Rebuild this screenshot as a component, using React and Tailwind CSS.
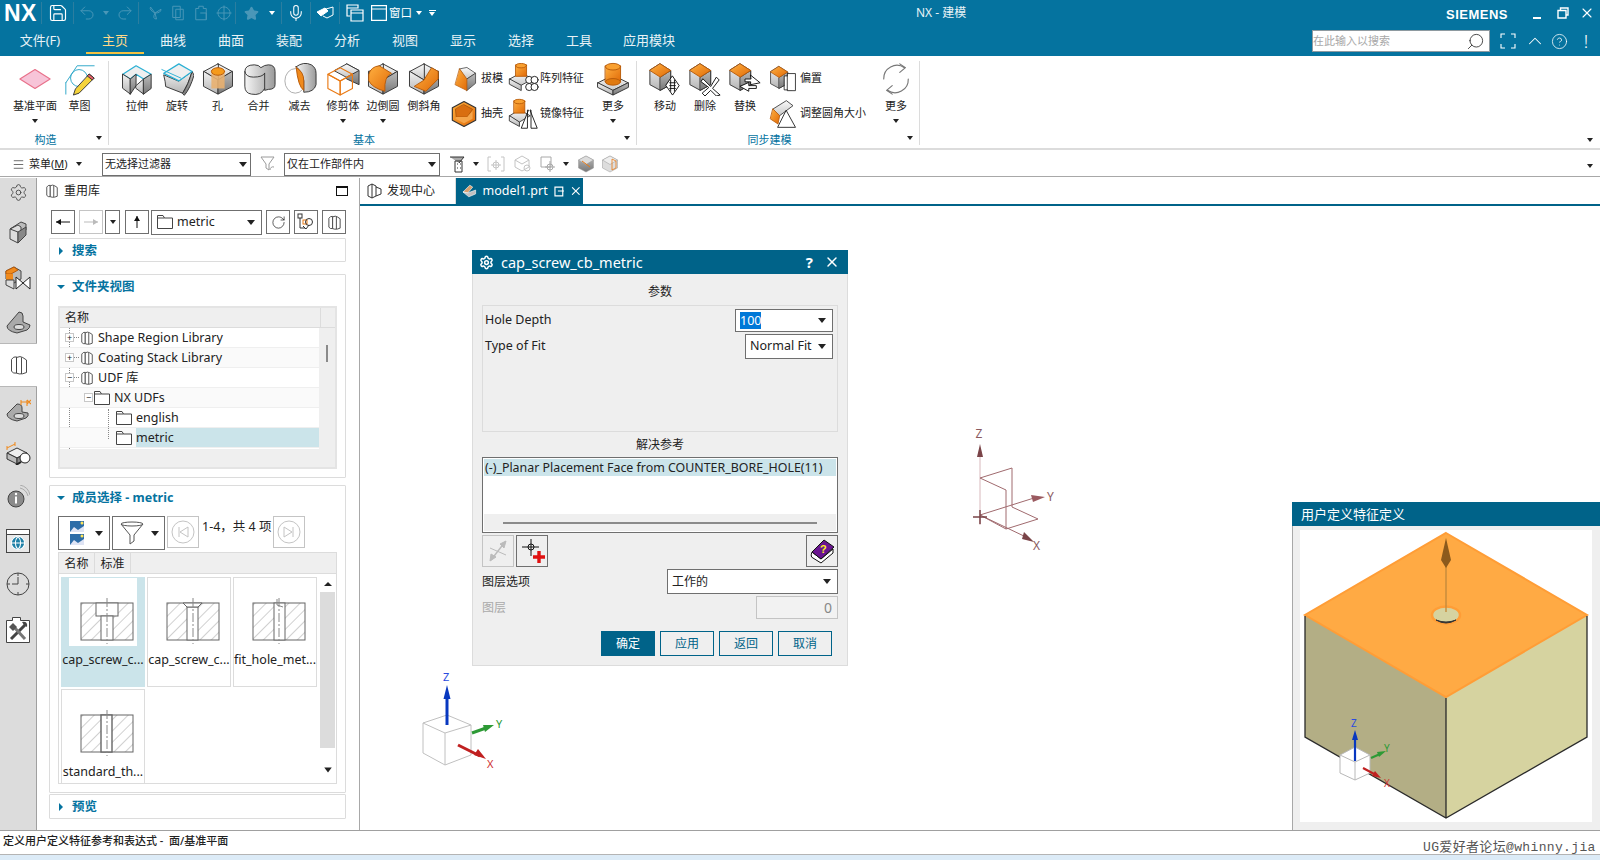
import React from 'react';
import { Save, Undo2, Redo2, Star, Mic, ChevronUp, CircleHelp, Search, X, Settings, Menu, RotateCw, Globe } from 'lucide-react';

const Caret = ({ c = 'border-t-[#222]', cls = '' }) => (
  <span className={`inline-block w-0 h-0 border-l-[3px] border-r-[3px] border-t-[4px] border-l-transparent border-r-transparent ${c} ${cls}`} />
);
const BigCaret = ({ cls = '' }) => (
  <span className={`inline-block w-0 h-0 border-l-[4px] border-r-[4px] border-t-[5px] border-l-transparent border-r-transparent border-t-[#222] ${cls}`} />
);
const Sep = ({ c = 'bg-[#2b7ea0]', h = 'h-[22px]' }) => <span className={`w-px ${h} ${c} shrink-0`} />;

const Defs = () => (
  <svg width="0" height="0" className="absolute">
    <defs>
      <linearGradient id="gt" x1="0" y1="0" x2="0" y2="1"><stop offset="0" stopColor="#fafafa" /><stop offset="1" stopColor="#c8c8c8" /></linearGradient>
      <linearGradient id="gl" x1="0" y1="0" x2="0" y2="1"><stop offset="0" stopColor="#f2f2f2" /><stop offset="1" stopColor="#b4b4b4" /></linearGradient>
      <linearGradient id="gr" x1="0" y1="0" x2="0" y2="1"><stop offset="0" stopColor="#bcbcbc" /><stop offset="1" stopColor="#777" /></linearGradient>
      <linearGradient id="or" x1="0" y1="0" x2="1" y2="1"><stop offset="0" stopColor="#ffb040" /><stop offset="1" stopColor="#e06a08" /></linearGradient>
      <linearGradient id="cy" x1="0" y1="0" x2="1" y2="0"><stop offset="0" stopColor="#f6f6f6" /><stop offset="1" stopColor="#9a9a9a" /></linearGradient>
    </defs>
  </svg>
);

const I = ({ s = 34, children, w, cls = '' }) => (
  <svg width={w || s} height={s} viewBox="0 0 36 36" className={`shrink-0 ${cls}`} strokeLinejoin="round" strokeLinecap="round">{children}</svg>
);
const Hex = ({ top = 'url(#gt)' }) => (
  <g stroke="#333" strokeWidth="1">
    <polygon points="18,2 33,10 18,19" fill={top} />
    <polygon points="18,2 3,10 18,19" fill={top} />
    <polygon points="3,10 18,19 18,34 3,26" fill="url(#gl)" />
    <polygon points="33,10 18,19 18,34 33,26" fill="url(#gr)" />
  </g>
);
const icons = {
  datum: <I><polygon points="18,8 34,18 18,28 2,18" fill="#f7c4d8" stroke="#e8708a" strokeWidth="1.2" /></I>,
  sketch: <I><path d="M3 22 L15 4 H33" fill="none" stroke="#2aa6c8" strokeWidth="1" /><path d="M3 22V34" stroke="#2aa6c8" fill="none" /><circle cx="17" cy="17" r="9" fill="none" stroke="#2aa6c8" /><polygon points="28,13 33,17 17,33 11,35 13,29" fill="#f5d33a" stroke="#333" /><polygon points="28,13 33,17 31,19 26,15" fill="#e8606a" stroke="#333" /></I>,
  extrude: <I><polygon points="3,13 17,4 33,13 25,18 17,13 11,18" fill="#efefef" stroke="#2ab0d4" strokeWidth="1.3" /><polygon points="3,13 11,18 11,34 3,28" fill="url(#gl)" stroke="#333" /><polygon points="11,18 17,13 17,25 11,34" fill="url(#gr)" stroke="#333" /><polygon points="17,25 25,18 25,34 17,28" fill="url(#gl)" stroke="#333" /><polygon points="25,18 33,13 33,28 25,34" fill="url(#gr)" stroke="#333" /></I>,
  revolve: <I><path d="M4 14 Q6 22 6 26 L24 33 Q30 24 34 10 L20 20 Z" fill="url(#gl)" stroke="#333" /><path d="M24 33 Q30 24 34 10 L36 14 Q32 28 26 35Z" fill="url(#gr)" stroke="#333" /><polygon points="20,2 34,10 20,20 4,12" fill="#efefef" stroke="#2ab0d4" strokeWidth="1.3" /><path d="M2 8 L22 17" stroke="#2ab0d4" /></I>,
  hole: <I><Hex /><rect x="11" y="9" width="14" height="19" fill="#e8b070" opacity=".9" /><ellipse cx="18" cy="10" rx="7" ry="4" fill="#f59a1c" stroke="#b85a08" /></I>,
  unite: <I><path d="M3 10 Q3 3 13 3 Q18 3 20 6 Q24 3 28 3 Q35 3 35 10 V24 Q35 29 28 29 L24 30 V28 Q20 36 10 34 Q3 33 3 26Z" fill="url(#cy)" stroke="#333" /><path d="M3 10 Q4 16 12 16 Q22 16 24 12" fill="none" stroke="#333" /><path d="M24 12V28" stroke="#333" /></I>,
  subtract: <I><ellipse cx="13" cy="20" rx="11" ry="13" fill="none" stroke="#aaa" /><path d="M14 5 Q22 -1 30 3 Q35 6 35 12 V24 Q33 32 22 32 L22 20 Q20 10 14 5Z" fill="url(#cy)" stroke="#333" /><path d="M14 6 Q22 10 22 20 V30 Q16 26 14 6 Z" fill="#f08a1c" stroke="#b85a08" /></I>,
  trim: <I><polygon points="22,2 35,9 35,24 22,18" fill="url(#gr)" stroke="#333" /><polygon points="9,9 22,2 35,9 22,16" fill="url(#gt)" stroke="#333" /><polygon points="2,13 15,6 28,13 15,20" fill="none" stroke="#e97a15" strokeWidth="1.2" /><polygon points="2,13 15,20 15,35 2,28" fill="none" stroke="#e97a15" strokeWidth="1.2" /><polygon points="28,13 15,20 15,35 28,28" fill="none" stroke="#e97a15" strokeWidth="1.2" /></I>,
  blend: <I><Hex /><path d="M3 13 Q5 5 14 4 L27 12 Q19 15 20 31 Q6 27 3 20Z" fill="url(#or)" stroke="#b85a08" /></I>,
  chamfer: <I><Hex /><polygon points="18,19 26,6 33,10 33,18 20,31 8,26" fill="url(#or)" stroke="#b85a08" /></I>,
  draft: <I s={26}><polygon points="12,4 22,2 34,10 22,18" fill="url(#gt)" stroke="#333" /><polygon points="22,18 34,10 34,24 22,34" fill="url(#gr)" stroke="#333" /><polygon points="12,4 22,18 22,34 6,26" fill="url(#or)" stroke="#b85a08" /></I>,
  shell: <I s={28}><polygon points="18,2 33,10 33,26 18,34 3,26 3,10" fill="url(#or)" stroke="#333" strokeWidth="1.5" /><polygon points="18,6 29,12 22,22 8,22 7,12" fill="#d96e10" stroke="#a65208" /><polygon points="8,22 22,22 29,14 29,24 18,30 7,24" fill="#f5a54a" /></I>,
  pattern: <I s={32}><polygon points="3,18 16,11 29,18 16,25" fill="url(#gt)" stroke="#333" /><polygon points="3,18 16,25 16,31 3,24" fill="url(#gl)" stroke="#333" /><rect x="10" y="2" width="12" height="13" fill="url(#or)" stroke="#b85a08" /><ellipse cx="16" cy="3" rx="6" ry="2.5" fill="#f9a030" stroke="#b85a08" /><g fill="#fff" stroke="#111"><circle cx="25" cy="19" r="4" /><circle cx="31" cy="19" r="4" /><circle cx="25" cy="27" r="4" /><circle cx="31" cy="27" r="4" /></g></I>,
  mirror: <I s={32}><polygon points="3,20 14,13 26,20 14,27" fill="url(#gt)" stroke="#333" /><polygon points="3,20 14,27 14,32 3,26" fill="url(#gl)" stroke="#333" /><rect x="8" y="3" width="12" height="14" fill="url(#or)" stroke="#b85a08" /><ellipse cx="14" cy="4" rx="6" ry="2.5" fill="#f9a030" stroke="#b85a08" /><path d="M24 14 L16 34 H23 V14 Z M26 14 L34 34 H27 V14Z" fill="#fff" stroke="#111" /></I>,
  more: <I><polygon points="2,22 18,14 34,22 18,30" fill="url(#gt)" stroke="#333" /><polygon points="2,22 18,30 18,35 2,27" fill="url(#gl)" stroke="#333" /><polygon points="34,22 18,30 18,35 34,27" fill="url(#gr)" stroke="#333" /><rect x="10" y="4" width="16" height="17" fill="url(#or)" stroke="#b85a08" /><ellipse cx="18" cy="5" rx="8" ry="3.5" fill="#f9a030" stroke="#b85a08" /><ellipse cx="18" cy="21" rx="8" ry="3.5" fill="#e07a10" stroke="#b85a08" /></I>,
};
const Box = () => (
  <g stroke="#333">
    <polygon points="13,2 24,9 24,24 13,30 2,24 2,9" fill="url(#gl)" />
    <polygon points="13,16 24,9 24,24 13,30" fill="url(#gr)" />
    <polygon points="13,2 24,9 13,16 2,9" fill="url(#or)" stroke="#b85a08" />
  </g>
);
const sync = {
  move: <I><Box /><path d="M26 15 L33 25 L26 35 L19 25Z" fill="#fff" stroke="#111" /><path d="M23 22h6M23 25h6M23 28h6M24 19v12M28 19v12" stroke="#111" strokeWidth="1" /></I>,
  del: <I><Box /><path d="M16 18 L24 26 L30 16 L33 19 L26 28 L34 35 L30 36 L24 30 L18 36 L15 33 L22 27 L14 21Z" fill="#fff" stroke="#111" /></I>,
  rep: <I><Box /><path d="M24 14 L34 22 L24 24 V21 H18 V18 H24Z M22 22 V25 H30 V28 H22 V31 L13 26Z" fill="#fff" stroke="#111" /></I>,
  off: <I s={28}><Box /><rect x="20" y="14" width="10" height="18" fill="#fff" stroke="#111" /><rect x="24" y="11" width="10" height="22" fill="#fff" stroke="#111" /></I>,
  res: <I s={30}><polygon points="6,12 22,2 30,8 14,20" fill="url(#gt)" stroke="#333" /><polygon points="6,12 14,20 12,30 3,24" fill="url(#or)" stroke="#b85a08" /><polygon points="22,14 33,34 12,34" fill="#fff" stroke="#111" /></I>,
};

const RBtn = ({ w = 'w-[41px]', icon, label, arrow, tc = 'text-[#222]' }) => (
  <div className={`${w} shrink-0 flex flex-col items-center`}>
    <div className="h-[36px] flex items-center justify-center">{icon}</div>
    <span className={`mt-[2px] text-[11px] leading-[14px] whitespace-nowrap ${tc}`}>{label}</span>
    {arrow && <Caret cls="mt-[6px]" />}
  </div>
);
const RSmall = ({ icon, label, w }) => (
  <div className={`${w} h-[35px] flex items-center gap-[2px]`}>
    <span className="w-[30px] flex justify-center shrink-0">{icon}</span>
    <span className="text-[11px] whitespace-nowrap text-[#222]">{label}</span>
  </div>
);
const RGroup = ({ w, label, children, pl }) => (
  <div className={`${w} shrink-0 h-[84px] flex flex-col border-r border-[#dcdcdc]`}>
    <div className={`h-[72px] flex ${pl}`}>{children}</div>
    <div className="relative flex-1 flex items-center justify-center pr-[17px] text-[11px] leading-none text-[#05739f]">
      {label}
      <Caret cls="absolute right-[6px] top-[3px]" />
    </div>
  </div>
);

const Ribbon = () => (
  <div className="h-[94px] shrink-0 bg-white border-b-[2px] border-[#dcdcdc] flex pt-[5px] relative">
    <RGroup w="w-[109px]" label="构造" pl="pl-[10px]">
      <RBtn w="w-[50px]" icon={icons.datum} label="基准平面" arrow />
      <RBtn w="w-[41px] -ml-[1px]" icon={icons.sketch} label="草图" />
    </RGroup>
    <RGroup w="w-[528px]" label="基本" pl="pl-[8px]">
      <RBtn w="w-[40px]" icon={icons.extrude} label="拉伸" />
      <RBtn w="w-[40px]" icon={icons.revolve} label="旋转" />
      <RBtn icon={icons.hole} label="孔" />
      <RBtn icon={icons.unite} label="合并" />
      <RBtn icon={icons.subtract} label="减去" />
      <RBtn w="w-[46px]" icon={icons.trim} label="修剪体" arrow />
      <RBtn w="w-[34px]" icon={icons.blend} label="边倒圆" arrow />
      <RBtn w="w-[48px]" icon={icons.chamfer} label="倒斜角" />
      <div className="w-[59px] ml-[1px] shrink-0 flex flex-col">
        <RSmall w="w-[59px]" icon={icons.draft} label="拔模" />
        <RSmall w="w-[59px]" icon={icons.shell} label="抽壳" />
      </div>
      <div className="w-[85px] shrink-0 flex flex-col">
        <RSmall w="w-[85px]" icon={icons.pattern} label="阵列特征" />
        <RSmall w="w-[85px]" icon={icons.mirror} label="镜像特征" />
      </div>
      <RBtn w="w-[40px]" icon={icons.more} label="更多" arrow />
    </RGroup>
    <RGroup w="w-[283px]" label="同步建模" pl="pl-[8px]">
      <RBtn w="w-[40px]" icon={sync.move} label="移动" />
      <RBtn w="w-[40px]" icon={sync.del} label="删除" />
      <RBtn w="w-[40px]" icon={sync.rep} label="替换" />
      <div className="w-[111px] pl-[3px] shrink-0 flex flex-col">
        <RSmall w="w-[108px]" icon={sync.off} label="偏置" />
        <RSmall w="w-[108px]" icon={sync.res} label="调整圆角大小" />
      </div>
      <RBtn w="w-[40px]" icon={<I><path d="M27 6 A14 14 0 0 0 5 18" fill="none" stroke="#777" strokeWidth="1.2" /><path d="M9 30 A14 14 0 0 0 31 18" fill="none" stroke="#777" strokeWidth="1.2" /><path d="M22 2 L28 6 L22 11 M14 25 L8 30 L14 34" fill="none" stroke="#777" strokeWidth="1.2" /></I>} label="更多" arrow />
    </RGroup>
    <Caret cls="absolute right-[7px] bottom-[6px]" />
  </div>
);

const TitleBar = () => (
  <div className="h-[28px] shrink-0 bg-[#05739f] flex items-center text-white pb-[2px]">
    <span className="w-[41px] pl-[4px] font-['Liberation_Sans',sans-serif] text-[23px] font-bold leading-none tracking-[0.5px]">NX</span>
    <Sep />
    <span className="w-[31px] flex justify-center"><Save size={20} strokeWidth={1.4} /></span>
    <Sep />
    <span className="w-[26px] flex justify-center text-[#4a97b8]"><Undo2 size={18} strokeWidth={1.3} /></span>
    <span className="w-[12px] flex justify-center"><Caret c="border-t-[#4a97b8]" /></span>
    <span className="w-[26px] flex justify-center text-[#4a97b8]"><Redo2 size={18} strokeWidth={1.3} /></span>
    <Sep />
    <span className="w-[4px]" />
    {[
      <path d="M12 12 L6 4 Q4 8 12 12 L20 7 Q20 12 12 12 L14 20 Q8 20 12 12" />,
      <path d="M5 3h10v15H5z M9 7h10v14H9z" />,
      <path d="M5 6h4V3h6v3h4v15H5z M11 12h8v9" />,
      <path d="M12 4a8 8 0 1 0 .01 0 M12 2v20 M2 12h20" />,
    ].map((p, i) => (
      <span key={i} className="w-[23px] flex justify-center text-[#4a97b8]"><svg width="18" height="18" viewBox="0 0 24 24" fill="none" stroke="currentColor" strokeWidth="1.3">{p}</svg></span>
    ))}
    <Sep />
    <span className="w-[30px] flex justify-center text-[#4a97b8]"><Star size={15} fill="currentColor" /></span>
    <span className="w-[12px] flex justify-center"><Caret c="border-t-white" /></span>
    <span className="w-[3px]" />
    <Sep />
    <span className="w-[28px] flex justify-center"><Mic size={18} strokeWidth={1.4} /></span>
    <Sep />
    <span className="w-[28px] flex justify-center">
      <svg width="18" height="14" viewBox="0 0 18 14" fill="none" stroke="#fff" strokeWidth="1"><path d="M1 6 L9 2 L12 5 L5 10 Z" fill="#fff" /><path d="M10 3 L17 1 V9 L11 12 L7 10" /></svg>
    </span>
    <Sep />
    <span className="w-[30px] flex justify-center">
      <svg width="18" height="18" viewBox="0 0 18 18" fill="none" stroke="#fff" strokeWidth="1.2"><path d="M1 1h11v3H1z M1 4v8h3" /><path d="M5 6h12v11H5z M5 9h12" /></svg>
    </span>
    <span className="w-[18px] flex justify-center">
      <svg width="16" height="16" viewBox="0 0 16 16" fill="none" stroke="#fff" strokeWidth="1.2"><path d="M.6.6h14.8v14.8H.6z M.6 4h14.8" /></svg>
    </span>
    <span className="ml-[1px] w-[24px] text-[11.5px] whitespace-nowrap">窗口</span>
    <span className="w-[12px] flex justify-center"><Caret c="border-t-white" /></span>
    <span className="w-[14px] flex flex-col items-center gap-[1px]"><span className="w-[7px] h-px bg-white" /><Caret c="border-t-white" /></span>
    <span className="ml-[477px] text-[12px] font-normal whitespace-nowrap text-[#e8f2f6]">NX - 建模</span>
    <span className="ml-auto mr-[25px] text-[13px] font-bold font-['Liberation_Sans',sans-serif] tracking-[0.5px] leading-none mt-[3px]">SIEMENS</span>
    <span className="w-[8px] h-[2px] bg-white mt-[10px] mr-[16px]" />
    <svg width="12" height="12" viewBox="0 0 12 12" fill="none" stroke="#fff" strokeWidth="1.4" className="mr-[10px]"><path d="M3.5 3V1h7.5v7H9 M1 3.5h8v7.5H1z" /></svg>
    <X size={16} strokeWidth={1.6} className="mr-[5px]" />
  </div>
);

const MenuBar = () => (
  <div className="h-[28px] shrink-0 bg-[#05739f] flex items-stretch text-white text-[13px] pb-[2px]">
    <span className="ml-[11px] w-[58px] flex items-center justify-center text-[#e8f2f6]">文件(F)</span>
    <span className="ml-[17px] w-[58px] flex items-center justify-center text-[#ffd98a] border-b-[2px] border-[#f5c242] pt-[2px]">主页</span>
    {['曲线', '曲面', '装配', '分析', '视图', '显示', '选择', '工具'].map((t) => (
      <span key={t} className="w-[58px] flex items-center justify-center text-[#e8f2f6]">{t}</span>
    ))}
    <span className="w-[82px] flex items-center justify-center text-[#e8f2f6]">应用模块</span>
    <div className="ml-auto flex items-center">
      <div className="w-[178px] h-[22px] bg-white border border-[#8e9aa0] flex items-center justify-between text-[11px] text-[#a8a8a8] pr-[4px]">
        <span>在此输入以搜索</span>
        <Search size={19} strokeWidth={1.1} className="text-[#333] -scale-x-100" />
      </div>
      <span className="w-[36px] flex justify-center">
        <svg width="16" height="16" viewBox="0 0 16 16" fill="none" stroke="#fff" strokeWidth="1.1"><path d="M1 5V1h4 M11 1h4v4 M15 11v4h-4 M5 15H1v-4" /></svg>
      </span>
      <ChevronUp size={22} strokeWidth={1.1} className="mx-[-2px]" />
      <span className="w-[30px] flex justify-center"><CircleHelp size={17} strokeWidth={1.1} /></span>
      <span className="w-[24px] mr-[2px] flex justify-center text-[18px] leading-none font-light">!</span>
    </div>
  </div>
);

const Combo = ({ w, children }) => (
  <div className={`${w} h-[23px] border border-[#6f6f6f] bg-white flex items-center justify-between pl-[2px] pr-[3px] text-[11px] text-[#222] shrink-0`}>
    <span className="whitespace-nowrap">{children}</span><BigCaret />
  </div>
);
const GIcon = ({ children, w = 'w-[24px]', c = '#9a9a9a' }) => (
  <span className={`${w} flex justify-center shrink-0`}><svg width="20" height="20" viewBox="0 0 20 20" fill="none" stroke={c} strokeWidth="1">{children}</svg></span>
);
const SelBar = () => (
  <div className="h-[27px] shrink-0 bg-white border-b-[1px] border-[#a8a8a8] flex items-center relative pt-[2px]">
    <span className="ml-[12px] w-[17px]"><Menu size={13} strokeWidth={1.2} className="text-[#222]" /></span>
    <span className="text-[11px] text-[#222] whitespace-nowrap w-[44px]">菜单(<span className="underline">M</span>)</span>
    <Caret cls="ml-[3px]" />
    <span className="ml-[5px]"><Sep c="bg-[#dcdcdc]" /></span>
    <span className="ml-[15px]"><Combo w="w-[149px]">无选择过滤器</Combo></span>
    <GIcon w="w-[33px]"><path d="M3 3h13l-5 7v6l-3-2v-4z" /><path d="M16 13a3 3 0 0 0-4 3" /></GIcon>
    <Combo w="w-[156px]">仅在工作部件内</Combo>
    <GIcon w="w-[36px]" c="#333"><path d="M2 3h14l-5 6" fill="#aaa" /><path d="M7 7h7v11H7z M9 10h1M12 10h1M9 14h1M12 14h1" /></GIcon>
    <Caret cls="-ml-[3px]" />
    <span className="w-[3px]" />
    <GIcon w="w-[28px]" c="#c4c4c4"><path d="M2 3h3M2 3v14h3M15 3h3v14h-3 M10 6v10 M5 11h10" /><circle cx="10" cy="11" r="3" /></GIcon>
    <GIcon w="w-[26px]" c="#c4c4c4"><path d="M9 2l7 4v7l-7 4-7-4V6z M2 6l7 4 7-4" /><circle cx="14" cy="14" r="3" /></GIcon>
    <GIcon w="w-[24px]" c="#a8a8a8"><path d="M3 3h10v10H3z" /><circle cx="12" cy="13" r="3" /><path d="M12 7v11M7 13h10" /></GIcon>
    <Caret cls="ml-[3px]" />
    <span className="w-[5px]" />
    <span className="w-[24px] flex justify-center"><svg width="18" height="18" viewBox="0 0 36 36"><polygon points="18,2 33,10 33,26 18,34 3,26 3,10" fill="url(#gr)" stroke="#999" /><polygon points="18,2 33,10 18,19 3,10" fill="#ddd" stroke="#999" /><path d="M10 12 L26 24" stroke="#e97a15" strokeWidth="2" /></svg></span>
    <span className="w-[24px] flex justify-center"><svg width="18" height="18" viewBox="0 0 36 36"><polygon points="18,2 33,10 33,26 18,34 3,26 3,10" fill="#ddd" stroke="#999" /><polygon points="18,2 33,10 18,19 3,10" fill="#eee" stroke="#999" /><path d="M22 8 V30 M22 8 L30 12 V26 L22 30" fill="none" stroke="#e97a15" strokeWidth="1.6" /></svg></span>
    <span className="ml-[7px]"><Sep c="bg-[#dcdcdc]" /></span>
    <Caret cls="absolute right-[7px] top-[14px]" />
  </div>
);

const Books = ({ s = 14, c = '#444' }) => (
  <svg width={s} height={s} viewBox="0 0 16 16" fill="#fff" stroke={c} strokeWidth="1" className="shrink-0"><path d="M2 3.5 Q3.5 1 6 1.5 V14.5 Q3.5 15 2 13Z" /><path d="M6 2 Q9 0.5 11 2 L14 4 V14 L11 15 Q8 15.5 6 14.5Z" /><path d="M10 2 V15" /></svg>
);

const RailIcon = ({ children, h = 'h-[40px]', m = '', active }) => (
  <div className={`${h} ${m} flex items-center justify-center shrink-0 ${active ? 'w-[37px] bg-white border-y border-[#b8b8b8] relative z-10' : 'w-[36px]'}`}>{children}</div>
);
const Rail = () => (
  <div className="w-[37px] shrink-0 bg-[#dcdcdc] border-r border-[#a0a0a0] flex flex-col">
    <RailIcon h="h-[28px]"><Settings size={19} strokeWidth={1.1} className="text-[#444]" /></RailIcon>
    <RailIcon m="mt-[7px]"><svg width="22" height="24" viewBox="0 0 22 24"><polygon points="3,8 11,4 14,6 14,12 19,9 19,3 14,1" fill="#bbb" stroke="#444" /><polygon points="3,8 11,11 11,22 3,18" fill="#ddd" stroke="#444" /><polygon points="11,11 19,6 19,14 11,22" fill="#888" stroke="#444" /></svg></RailIcon>
    <RailIcon m="mt-[5px]"><svg width="28" height="26" viewBox="0 0 28 26"><polygon points="2,6 10,2 17,6 17,14 10,18 2,14" fill="#bbb" stroke="#444" /><polygon points="2,6 10,2 14,5 7,9 2,9" fill="#f08a1c" stroke="#b85a08" /><polygon points="2,9 9,9 9,15 2,15" fill="#f08a1c" /><polygon points="2,15 10,15 10,24 2,20" fill="#ddd" stroke="#444" /><path d="M12 12 L26 24 V12 L12 24Z" fill="#fff" stroke="#222" /></svg></RailIcon>
    <RailIcon m="mt-[4px]"><svg width="26" height="24" viewBox="0 0 26 24"><path d="M2 16 L14 2 Q18 2 18 6 L18 12 L25 15 Q25 18 22 20 L12 23 Q2 21 2 16Z" fill="#aaa" stroke="#444" /><ellipse cx="14" cy="17" rx="5" ry="2.5" fill="#ddd" stroke="#444" /></svg></RailIcon>
    <RailIcon h="h-[44px]" m="mt-[1px]" active><svg width="20" height="26" viewBox="0 0 16 16"><g fill="#fff" stroke="#333" strokeWidth=".7"><path d="M2 3.5 Q3.5 1 6 1.5 V14.5 Q3.5 15 2 13Z" /><path d="M6 2 Q9 0.5 11 2 L14 4 V14 L11 15 Q8 15.5 6 14.5Z" /><path d="M10 2 V15" /></g></svg></RailIcon>
    <RailIcon m="mt-[3px]"><svg width="26" height="24" viewBox="0 0 26 24"><path d="M2 16 L12 6 Q17 6 17 10 L17 14 L23 15 Q24 18 21 20 L12 23 Q2 21 2 16Z" fill="#aaa" stroke="#444" /><ellipse cx="14" cy="18" rx="5" ry="2.5" fill="#ddd" stroke="#444" /><path d="M16 2 L16 7 M16 4 H22 M22 2V8 M22 2 L26 6 M26 2 L22 6" stroke="#f08a1c" strokeWidth="1.1" fill="none" /></svg></RailIcon>
    <RailIcon m="mt-[3px]"><svg width="26" height="24" viewBox="0 0 26 24"><polygon points="2,12 12,7 22,12 12,17" fill="#eee" stroke="#333" /><polygon points="2,12 12,17 12,23 2,18" fill="#bbb" stroke="#333" /><polygon points="22,12 12,17 12,23 22,18" fill="#888" stroke="#333" /><circle cx="20" cy="17" r="5" fill="#fff" stroke="#222" /><path d="M16 21 L11 24" stroke="#222" strokeWidth="2" /><path d="M2 7 L10 3 M2 5V9 M10 1V5" stroke="#f08a1c" fill="none" /></svg></RailIcon>
    <RailIcon m="mt-[4px]"><svg width="24" height="24" viewBox="0 0 24 24"><circle cx="10" cy="14" r="8" fill="#8b8b8b" stroke="#444" /><circle cx="10" cy="9" r="1.2" fill="#fff" /><rect x="9" y="11.5" width="2" height="7" fill="#fff" /><path d="M14 3 A11 11 0 0 1 22 11 M14 0 A13 13 0 0 1 24 10" fill="none" stroke="#aaa" /></svg></RailIcon>
    <RailIcon m="mt-[4px]"><div className="w-[24px] h-[24px] border border-[#444] bg-[#e8e8e8] relative flex items-end justify-center pb-[1px]"><span className="absolute top-0 left-0 right-0 h-[5px] border-b border-[#444] bg-white" /><Globe size={16} strokeWidth={1.6} className="text-white fill-[#1c7fa6]" /></div></RailIcon>
    <RailIcon m="mt-[3px]"><svg width="24" height="24" viewBox="0 0 24 24" fill="none" stroke="#444" strokeWidth="1"><circle cx="12" cy="12" r="11" /><path d="M12 1V4M12 20v3M1 12h3M20 12h3M12 5V12H6" /></svg></RailIcon>
    <RailIcon m="mt-[6px]"><svg width="24" height="26" viewBox="0 0 24 26"><path d="M.5 3.5h6v-3h8v3h9v22H.5z" fill="#fff" stroke="#444" /><path d="M5 22 L19 8" stroke="#444" strokeWidth="3" /><path d="M16 5 Q22 4 21 10 L18 8 Z" fill="#444" /><path d="M19 22 L8 10" stroke="#777" strokeWidth="3" /><path d="M3 10 L7 6 L11 10 L7 14Z" fill="#555" /></svg></RailIcon>
  </div>
);

const Btn = ({ w = 'w-[24px]', dis, children, cls = '' }) => (
  <div className={`${w} h-[24px] border ${dis ? 'border-[#c4c4c4]' : 'border-[#6f6f6f]'} flex items-center justify-center shrink-0 ${cls}`}>{children}</div>
);
const Tri = () => <span className="inline-block w-0 h-0 border-t-[4px] border-b-[4px] border-l-[4px] border-t-transparent border-b-transparent border-l-[#05739f]" />;
const TriD = () => <span className="inline-block w-0 h-0 border-l-[4px] border-r-[4px] border-t-[4px] border-l-transparent border-r-transparent border-t-[#05739f]" />;
const SecHead = ({ open, children }) => (
  <div className="flex items-center h-[24px] pl-[7px] gap-[7px] shrink-0 text-[12.5px] font-bold text-[#05739f] whitespace-nowrap">
    <span className="w-[8px] flex justify-center">{open ? <TriD /> : <Tri />}</span>{children}
  </div>
);
const Folder = ({ s = 16 }) => (
  <svg width={s} height={s - 2} viewBox="0 0 16 14" fill="#fff" stroke="#444" strokeWidth="1" className="shrink-0"><path d="M.5 13.5V.5H6L7.5 3H15.5V13.5Z M.5 3H7.5" /></svg>
);

const Row = ({ pl, sign, icon, label, sel, guide }) => (
  <div className={`h-[20px] flex items-center border-b border-[#efefef] relative ${pl}`}>
    {sign && <span className="w-[9px] h-[9px] border border-[#c8c8c8] bg-white flex items-center justify-center text-[9px] leading-none text-[#222] shrink-0 z-10">{sign}</span>}
    {guide && <span className="w-[5px] h-0 border-t border-dotted border-[#888] shrink-0" />}
    <span className="ml-[1px] mr-[4px] flex">{icon}</span>
    <span className={`text-[12.5px] leading-[19px] text-[#222] whitespace-nowrap flex-1 ${sel ? 'bg-[#cbe4ea]' : ''}`}>{label}</span>
  </div>
);

const Section = ({ v }) => (
  <svg width="60" height="48" viewBox="0 0 60 48" fill="none">
    <defs><pattern id={`h${v}`} width="8" height="8" patternUnits="userSpaceOnUse" patternTransform="rotate(-45)"><path d="M0 0H8" stroke="#8a8a8a" strokeWidth=".8" /></pattern></defs>
    <rect x="4" y="6" width="52" height="37" fill={`url(#h${v})`} stroke="#666" />
    {v === 0 && <><rect x="19" y="6" width="22" height="13" fill="#fff" stroke="#666" /><rect x="24" y="19" width="12" height="24" fill="#fff" stroke="#666" /></>}
    {v === 1 && <><rect x="24" y="10" width="11" height="33" fill="#fff" stroke="#666" /><polygon points="20,6 39,6 35,10 24,10" fill="#fff" stroke="#666" /></>}
    {v === 2 && <><rect x="25" y="6" width="11" height="37" fill="#fff" stroke="#666" /><path d="M28 2 V8 L34 10" stroke="#888" /></>}
    {v === 3 && <><rect x="24" y="6" width="11" height="37" fill="#fff" stroke="#666" strokeWidth="1.4" /></>}
    <path d="M30 1V47" stroke="#888" strokeDasharray="9 2 2 2" />
  </svg>
);
const Thumb = ({ v, label, sel, cls }) => (
  <div className={`flex flex-col items-center border ${sel ? 'bg-[#cbe4ea] border-[#cbe4ea]' : 'bg-white border-[#dcdcdc]'} ${cls}`}>
    <div className="w-[68px] h-[68px] bg-white flex items-end justify-end pb-[1px] shrink-0"><Section v={v} /></div>
    <span className="mt-[5px] text-[12.5px] leading-[17px] text-[#222] whitespace-nowrap">{label}</span>
  </div>
);

const Panel = () => (
  <div className="w-[323px] shrink-0 bg-white border-r border-[#a8a8a8] flex flex-col relative">
    <div className="h-[26px] shrink-0 flex items-center pl-[8px] pr-[11px]">
      <Books />
      <span className="ml-[5px] text-[12px] text-[#222]">重用库</span>
      <span className="ml-auto w-[12px] h-[10px] border border-[#111] border-t-[2px]" />
    </div>
    <div className="pl-[12px] pr-[13px] flex flex-col">
      <div className="h-[28px] mt-[4px] shrink-0 flex items-center">
        <Btn cls="ml-[2px]"><svg width="16" height="8" viewBox="0 0 16 8"><path d="M1 4H15" stroke="#111" /><path d="M1 4l5-3v6z" fill="#111" /></svg></Btn>
        <Btn dis cls="ml-[4px]"><svg width="16" height="8" viewBox="0 0 16 8"><path d="M1 4H15" stroke="#bbb" /><path d="M15 4l-5-3v6z" fill="#bbb" /></svg></Btn>
        <Btn w="w-[15px]" cls="ml-[2px]"><Caret /></Btn>
        <Btn cls="ml-[5px]"><svg width="8" height="14" viewBox="0 0 8 14"><path d="M4 1V13" stroke="#111" /><path d="M4 1L1 6h6z" fill="#111" /></svg></Btn>
        <div className="ml-[2px] w-[111px] h-[25px] border border-[#6f6f6f] flex items-center pl-[5px] pr-[6px] shrink-0">
          <Folder /><span className="ml-[4px] text-[12.5px] text-[#222]">metric</span><BigCaret cls="ml-auto" />
        </div>
        <Btn cls="ml-[4px]"><RotateCw size={15} strokeWidth={1} /></Btn>
        <Btn cls="ml-[4px]"><svg width="18" height="18" viewBox="0 0 18 18" fill="none" stroke="#333"><rect x="1" y="1" width="4" height="4" /><rect x="6" y="7" width="4" height="4" stroke="#e97a15" /><circle cx="12" cy="9" r="3.5" /><path d="M3 5V15H8" /><path d="M6 13l3 3 3-4" /></svg></Btn>
        <Btn cls="ml-[4px]"><Books s={15} /></Btn>
      </div>
      <div className="mt-[2px] h-[24px] border border-[#dcdcdc] rounded-[1px] shrink-0"><SecHead>搜索</SecHead></div>
      <div className="mt-[12px] h-[204px] border border-[#dcdcdc] rounded-[1px] shrink-0 flex flex-col">
        <SecHead open>文件夹视图</SecHead>
        <div className="mx-[8px] mt-[7px] h-[163px] border-[2px] border-[#e4e4e4] bg-[#efefef] flex flex-col">
          <div className="h-[20px] shrink-0 border-b border-[#dcdcdc] flex">
            <span className="flex-1 pl-[5px] text-[12px] leading-[20px] text-[#222]">名称</span>
            <span className="w-[15px] border-l border-[#dcdcdc]" />
          </div>
          <div className="flex flex-1 min-h-0">
            <div className="w-[259px] h-[121px] bg-white shrink-0 flex flex-col relative">
              <span className="absolute left-[9px] top-0 h-[121px] border-l border-dotted border-[#888]" />
              <Row pl="pl-[5px]" sign="+" guide icon={<Books />} label="Shape Region Library" />
              <Row pl="pl-[5px] bg-[#fafafa]" sign="+" guide icon={<Books />} label="Coating Stack Library" />
              <Row pl="pl-[5px]" sign="−" guide icon={<Books />} label="UDF 库" />
              <Row pl="pl-[24px] bg-[#fafafa]" sign="−" icon={<Folder />} label="NX UDFs" />
              <Row pl="pl-[55px]" icon={<Folder />} label="english" />
              <Row pl="pl-[55px] bg-[#fafafa]" icon={<Folder />} label="metric" sel />
              <span className="absolute left-[48px] top-[81px] h-[30px] border-l border-dotted border-[#888]" />
            </div>
            <div className="flex-1 flex justify-center pt-[17px]"><span className="w-[2px] h-[17px] bg-[#8a8a8a]" /></div>
          </div>
          <div className="flex-1 flex items-center pl-[17px]"><span className="w-[221px] h-[2px] bg-[#8a8a8a]" /></div>
        </div>
      </div>
      <div className="mt-[7px] h-[308px] border border-[#dcdcdc] rounded-[1px] shrink-0 flex flex-col">
        <SecHead open>成员选择 - metric</SecHead>
        <div className="mx-[8px] mt-[6px] h-[34px] flex items-start shrink-0">
          <div className="w-[52px] h-[34px] border border-[#6f6f6f] flex items-center pl-[11px] shrink-0">
            <svg width="14" height="24" viewBox="0 0 14 24"><rect width="14" height="11" fill="#2d6da8" /><rect width="14" height="11" y="13" fill="#2d6da8" /><path d="M0 11 L4 6 L8 9 L14 5 V11Z M0 24 L4 19 L8 22 L14 18 V24Z" fill="#dfe4f4" /><circle cx="12" cy="2" r="1.5" fill="#ffe55a" /><circle cx="12" cy="15" r="1.5" fill="#ffe55a" /></svg>
            <BigCaret cls="ml-[11px]" />
          </div>
          <div className="ml-[2px] w-[53px] h-[34px] border border-[#6f6f6f] flex items-center pl-[7px] shrink-0">
            <svg width="24" height="24" viewBox="0 0 24 24" fill="none" stroke="#555"><ellipse cx="12" cy="3" rx="11" ry="2" /><path d="M1 3 L10 14 V23 L14 20 V14 L23 3" /></svg>
            <BigCaret cls="ml-[7px]" />
          </div>
          <div className="ml-[2px] w-[32px] h-[32px] border border-[#c4c4c4] flex items-center justify-center shrink-0"><svg width="24" height="24" viewBox="0 0 24 24" fill="none" stroke="#c4c4c4"><circle cx="12" cy="12" r="11" /><path d="M8 7V17 M17 7 L9 12 L17 17Z" /></svg></div>
          <span className="ml-[3px] w-[71px] text-[12.5px] leading-[22px] text-[#222] whitespace-nowrap">1-4，共 4 项</span>
          <div className="w-[32px] h-[32px] border border-[#c4c4c4] flex items-center justify-center shrink-0"><svg width="24" height="24" viewBox="0 0 24 24" fill="none" stroke="#c4c4c4"><circle cx="12" cy="12" r="11" /><path d="M16 7V17 M7 7 L15 12 L7 17Z" /></svg></div>
        </div>
        <div className="mx-[8px] mt-[2px] h-[232px] border border-[#dcdcdc] flex flex-col shrink-0">
          <div className="h-[21px] bg-[#efefef] border-b border-[#dcdcdc] flex shrink-0 text-[12px] leading-[21px] text-[#222]">
            <span className="w-[36px] text-center border-r border-[#dcdcdc]">名称</span>
            <span className="w-[36px] text-center border-r border-[#dcdcdc]">标准</span>
          </div>
          <div className="flex-1 flex min-h-0">
            <div className="flex-1 pl-[2px] pt-[3px] flex flex-col gap-[2px]">
              <div className="flex gap-[2px]">
                <Thumb v={0} sel label="cap_screw_c..." cls="w-[84px] h-[110px]" />
                <Thumb v={1} label="cap_screw_c..." cls="w-[84px] h-[110px]" />
                <Thumb v={2} label="fit_hole_met..." cls="w-[84px] h-[110px]" />
              </div>
              <Thumb v={3} label="standard_th..." cls="w-[84px] flex-1 border-b-0" />
            </div>
            <div className="w-[17px] flex flex-col items-center pt-[8px] shrink-0">
              <span className="w-0 h-0 border-l-[4px] border-r-[4px] border-b-[4px] border-l-transparent border-r-transparent border-b-[#222]" />
              <span className="w-[15px] h-[156px] bg-[#dcdcdc] mt-[6px]" />
              <Caret cls="mt-[20px] scale-125" />
            </div>
          </div>
        </div>
      </div>
      <div className="mt-[1px] h-[25px] border border-[#dcdcdc] rounded-[1px] shrink-0"><SecHead>预览</SecHead></div>
    </div>
  </div>
);

const TabRow = () => (
  <div className="h-[28px] shrink-0 bg-white border-b-[2px] border-[#006389] flex items-stretch">
    <div className="w-[96px] flex items-center pl-[7px] gap-[4px] border-r border-[#dcdcdc] text-[12px] text-[#222]">
      <svg width="16" height="16" viewBox="0 0 16 16" fill="none" stroke="#333"><path d="M1 13 V3 L5 1 L9 3 V13 L5 15Z" /><path d="M9 4 L14 6 V11 L9 13" /><path d="M5 1V15" /></svg>
      发现中心
    </div>
    <div className="w-[127px] bg-[#006389] flex items-center pl-[6px] text-white text-[12.5px]">
      <svg width="16" height="14" viewBox="0 0 16 14"><polygon points="1,8 8,1 11,3 6,9" fill="#d8a070" stroke="#fff" strokeWidth=".6" /><polygon points="1,8 6,9 14,6 14,10 7,13" fill="#c0c0c0" stroke="#fff" strokeWidth=".6" /></svg>
      <span className="ml-[5px]">model1.prt</span>
      <svg width="11" height="11" viewBox="0 0 11 11" fill="none" stroke="#fff" strokeWidth="1.2" className="ml-[6px]"><path d="M1 1H9V10H1Z M4 5H11" /></svg>
      <X size={14} strokeWidth={2} className="ml-[5px]" />
    </div>
  </div>
);

const CanvasArt = () => (
  <>
    <svg width="120" height="120" viewBox="0 0 120 120" className="absolute left-[410px] top-[660px]" fontFamily="Noto Sans" fontSize="11">
      <g fill="#fff" stroke="#c0c0c0" strokeWidth="1">
        <polygon points="13,63 37,55 61,65 61,95 35,105 13,93" />
        <path d="M13 63 L35 73 L61 65 M35 73 V105" fill="none" />
      </g>
      <path d="M37 65 V34" stroke="#0838c0" strokeWidth="3" />
      <polygon points="37,25 33.5,39 40.5,39" fill="#0838c0" />
      <text x="33" y="21" fill="#2a4be0">Z</text>
      <path d="M62 73 L76 68" stroke="#2d9a35" strokeWidth="3" />
      <polygon points="84,65 73,65 75,72" fill="#2d9a35" />
      <text x="86" y="68" fill="#2d9a35">Y</text>
      <path d="M48 85 L70 96" stroke="#c02020" strokeWidth="3" />
      <polygon points="76,99 64,95 68,89" fill="#c02020" />
      <text x="77" y="108" fill="#d03030">X</text>
    </svg>
    <svg width="110" height="130" viewBox="0 0 110 130" className="absolute left-[960px] top-[425px]" fontFamily="Noto Sans" fontSize="12" fill="none">
      <g stroke="#a06a6e" strokeWidth="1">
        <path d="M20 32 V100" stroke="#d8b8bc" />
        <path d="M20 53 L52 43 V82" />
        <path d="M20 53 L46 65 V104" />
        <path d="M20 90 L74 73" />
        <path d="M20 90 L46 104 L78 94 L52 82" />
        <path d="M20 90 L68 113" />
        <path d="M13 92 H27 M20 85 V99" stroke="#7a4448" strokeWidth="1.5" />
      </g>
      <polygon points="20,19 17,32 23,32" fill="#7a4448" />
      <polygon points="85,72 71,70 73,77" fill="#9a5a60" />
      <polygon points="74,117 64,107 62,114" fill="#7a4448" />
      <text x="15.5" y="13" fill="#8a5a5e" stroke="none">Z</text>
      <text x="87" y="76" fill="#8a5a5e" stroke="none">Y</text>
      <text x="73" y="125" fill="#8a5a5e" stroke="none">X</text>
    </svg>
  </>
);

const DCombo = ({ w, h, children, cls = '' }) => (
  <div className={`${w} ${h} border border-[#6f6f6f] bg-white flex items-center justify-between pr-[6px] shrink-0 ${cls}`}>{children}<BigCaret /></div>
);
const DBtn = ({ primary, children }) => (
  <span className={`w-[54px] h-[25px] flex items-center justify-center border border-[#006389] text-[12px] ${primary ? 'bg-[#006389] text-white' : 'text-[#006389]'}`}>{children}</span>
);
const Dialog = () => (
  <div className="absolute left-[472px] top-[250px] w-[376px] h-[416px] bg-[#efefef] border border-[#dcdcdc] border-t-0 flex flex-col z-10 text-[#222]">
    <div className="h-[24px] shrink-0 -mx-px bg-[#006389] flex items-center text-white pl-[7px] pr-[8px]">
      <Settings size={15} strokeWidth={2.4} />
      <span className="ml-[7px] text-[14.5px] leading-none">cap_screw_cb_metric</span>
      <span className="ml-auto mr-[11px] text-[15px] font-bold leading-none">?</span>
      <X size={16} strokeWidth={2.2} />
    </div>
    <div className="px-[9px] flex flex-col flex-1">
      <div className="h-[31px] pt-[5px] flex items-center justify-center text-[12px] shrink-0">参数</div>
      <div className="h-[127px] shrink-0 border border-[#dcdcdc] pl-[2px] pr-[4px] pt-[2px] flex flex-col">
        <div className="flex items-center justify-between h-[24px]">
          <span className="text-[12.5px]">Hole Depth</span>
          <DCombo w="w-[98px]" h="h-[23px]" cls="pl-[4px]"><span className="bg-[#0078d7] text-white text-[12.5px] leading-[17px]">100</span></DCombo>
        </div>
        <div className="flex items-center justify-between h-[25px] mt-[2px]">
          <span className="text-[12.5px]">Type of Fit</span>
          <DCombo w="w-[88px]" h="h-[25px]" cls="pl-[4px]"><span className="text-[12.5px]">Normal Fit</span></DCombo>
        </div>
      </div>
      <div className="h-[25px] flex items-center justify-center text-[12px] shrink-0">解决参考</div>
      <div className="h-[76px] shrink-0 border border-[#6f6f6f] bg-white p-px flex flex-col">
        <div className="h-[17px] bg-[#cbe4ea] text-[12.4px] leading-[17px] pl-[1px] whitespace-nowrap shrink-0">(-)_Planar Placement Face from COUNTER_BORE_HOLE(11)</div>
        <div className="flex-1" />
        <div className="h-[17px] bg-[#efefef] flex items-center justify-center shrink-0"><span className="w-[314px] h-[2px] bg-[#8a8a8a]" /></div>
      </div>
      <div className="mt-[2px] h-[32px] flex shrink-0">
        <div className="w-[32px] border border-[#c4c4c4] flex items-center justify-center"><svg width="22" height="22" viewBox="0 0 22 22" fill="none" stroke="#bbb"><path d="M4 20 L18 2" strokeWidth="1.4" /><polygon points="19,1 13,4 17,8" fill="#bbb" /><polygon points="3,21 4,14 9,17" fill="#bbb" /><path d="M3 8 L19 15" /></svg></div>
        <div className="ml-[2px] w-[32px] border border-[#6f6f6f] flex items-center justify-center"><svg width="26" height="26" viewBox="0 0 26 26" fill="none"><path d="M12 1V18 M3 9H20" stroke="#111" /><circle cx="12" cy="9" r="3" stroke="#111" /><path d="M20 13V25 M14 19H26" stroke="#e01010" strokeWidth="3.4" /></svg></div>
        <div className="ml-auto w-[32px] border border-[#6f6f6f] flex items-center justify-center"><svg width="26" height="26" viewBox="0 0 26 26"><path d="M3 14 Q1 19 4 20 L12 25 L24 15 L24 11 L12 21Z" fill="#fff" stroke="#111" /><polygon points="3,14 15,2 25,9 12,21" fill="#6a1590" stroke="#111" /><text x="11" y="15" fontSize="11" fontWeight="bold" fill="#ffee22" fontFamily="Liberation Sans">?</text></svg></div>
      </div>
      <div className="mt-[2px] h-[25px] flex items-center justify-between shrink-0">
        <span className="text-[12px]">图层选项</span>
        <DCombo w="w-[171px]" h="h-[25px]" cls="pl-[4px]"><span className="text-[12px]">工作的</span></DCombo>
      </div>
      <div className="mt-[2px] h-[23px] flex items-center justify-between shrink-0">
        <span className="text-[12px] text-[#aaa]">图层</span>
        <div className="w-[82px] h-[23px] border border-[#c4c4c4] bg-[#f2f2f2] text-[14px] text-[#888] text-right pr-[5px] leading-[21px]">0</div>
      </div>
      <div className="mt-[12px] flex gap-[5px] justify-end pr-[6px]">
        <DBtn primary>确定</DBtn><DBtn>应用</DBtn><DBtn>返回</DBtn><DBtn>取消</DBtn>
      </div>
    </div>
  </div>
);

const Preview = () => (
  <div className="absolute right-0 top-[502px] w-[308px] h-[328px] border-l-[1px] border-[#a8a8a8] bg-[#efefef] flex flex-col z-10">
    <div className="h-[24px] bg-[#006389] text-white text-[13px] leading-[24px] pl-[9px] shrink-0 -ml-px">用户定义特征定义</div>
    <div className="mx-[7px] mt-[4px] w-[292px] h-[292px] bg-white shrink-0">
      <svg width="292" height="292" viewBox="0 0 292 292" fontFamily="Noto Sans" fontSize="10">
        <polygon points="5,85 146,167 146,288 5,207" fill="#b3ae85" />
        <polygon points="287,85 146,167 146,288 287,207" fill="#d6d3a0" />
        <polygon points="146,3 287,85 146,167 5,85" fill="#ffaa44" stroke="#ff9d36" strokeWidth="2" />
        <path d="M5 86 V207 L146 288 L287 207 V86 M146 168 V288" fill="none" stroke="#2a2a2a" strokeWidth="1.3" />
        <ellipse cx="146" cy="85" rx="14" ry="8.5" fill="#d6d3a0" stroke="#ff9d36" strokeWidth="2.5" />
        <path d="M136 90 Q146 96 156 90 Q146 94 136 90" fill="#333" stroke="#333" />
        <path d="M146 36 V82" stroke="#c48a3c" strokeWidth="1.4" />
        <polygon points="146,8 151,30 146,38 141,30" fill="#8c5a1c" />
        <g fill="#fff" stroke="#b8b8b8"><polygon points="40,225 55,217 70,225 70,243 55,250 40,243" /><path d="M40 225 L55 232 L70 225 M55 232 V250" fill="none" /></g>
        <path d="M55 231 V208" stroke="#0838c0" strokeWidth="2.2" />
        <polygon points="55,200 52,210 58,210" fill="#0838c0" />
        <text x="51" y="197" fill="#2a4be0">Z</text>
        <path d="M71 228 L80 224" stroke="#2d9a35" strokeWidth="2.2" /><polygon points="86,221 77,222 79,227" fill="#2d9a35" />
        <text x="84" y="222" fill="#2d9a35">Y</text>
        <path d="M63 238 L76 245" stroke="#c02020" strokeWidth="2.2" /><polygon points="81,248 72,246 75,241" fill="#c02020" />
        <text x="84" y="257" fill="#d03030">X</text>
      </svg>
    </div>
  </div>
);

export default function App() {
  return (
    <div className="w-[1600px] h-[860px] overflow-hidden flex flex-col relative bg-white font-['Noto_Sans','Noto_Sans_CJK_SC',sans-serif]">
      <Defs />
      <TitleBar />
      <MenuBar />
      <Ribbon />
      <SelBar />
      <div className="flex-1 min-h-0 flex border-t border-[#fff]">
        <Rail />
        <Panel />
        <div className="flex-1 flex flex-col bg-white">
          <TabRow />
          <div className="flex-1" />
        </div>
      </div>
      <div className="h-[24px] shrink-0 bg-white border-t border-[#a0a0a0] flex items-center pl-[3px] pb-[2px] text-[11px] font-medium text-[#222] whitespace-pre">定义用户定义特征参考和表达式 -  面/基准平面</div>
      <div className="h-[6px] shrink-0 bg-[#dcebf7] border-t border-[#b4b4b4]" />
      <CanvasArt />
      <Dialog />
      <Preview />
      <span className="absolute left-[1423px] top-[839px] text-[13px] leading-[18px] text-[#555] whitespace-nowrap font-['Liberation_Mono','Noto_Sans_CJK_SC',monospace] tracking-[0.35px]">UG爱好者论坛@whinny.jia</span>
    </div>
  );
}
